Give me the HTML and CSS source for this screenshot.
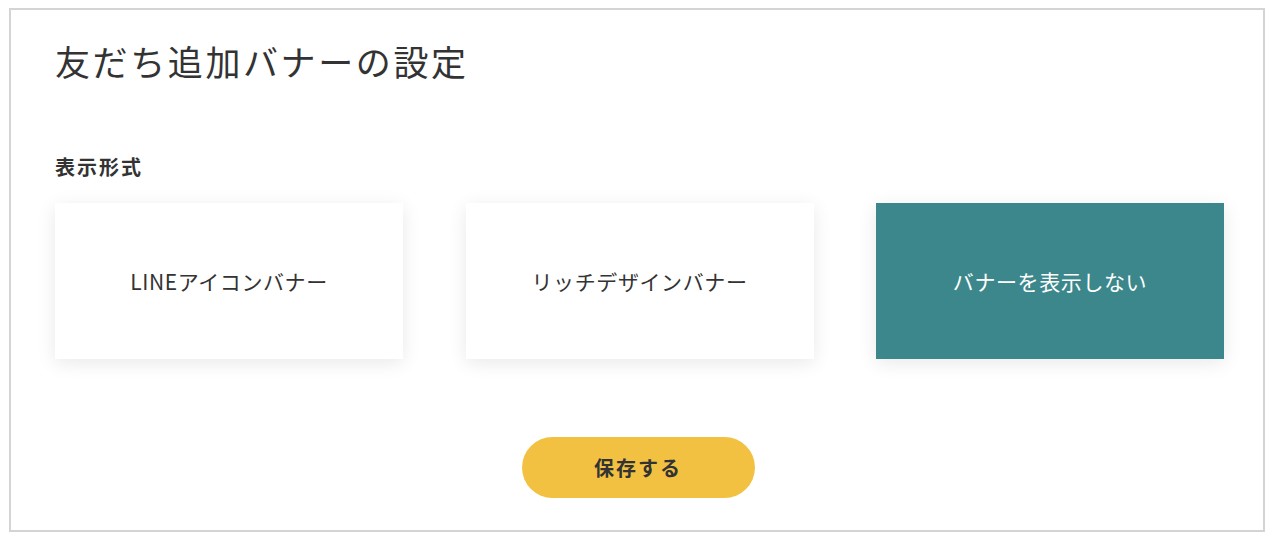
FILE: index.html
```html
<!DOCTYPE html>
<html lang="ja">
<head>
<meta charset="utf-8">
<link rel="stylesheet" href="styles.css">
</head>
<body>
<div class="panel">
  <h1 class="title">友だち追加バナーの設定</h1>
  <h2 class="label">表示形式</h2>
  <div class="options">
    <div class="option">LINEアイコンバナー</div>
    <div class="option">リッチデザインバナー</div>
    <div class="option selected">バナーを表示しない</div>
  </div>
  <div class="actions">
    <button class="save">保存する</button>
  </div>
</div>
</body>
</html>
```
FILE: styles.css
```css
html, body {
  margin: 0;
  padding: 0;
  background: #fff;
}
body {
  font-family: "Noto Sans CJK JP", "Noto Sans", sans-serif;
  color: #333;
}
.panel {
  box-sizing: border-box;
  margin: 8px 0 0 9px;
  width: 1256px;
  height: 524px;
  border: 2px solid #d4d4d4;
  padding: 22px 40px 0 44px;
}
.title {
  margin: 0;
  font-size: 35px;
  font-weight: 400;
  letter-spacing: 2.6px;
  line-height: 58px;
}
.label {
  margin: 63px 0 0;
  font-size: 20px;
  font-weight: 700;
  letter-spacing: 2px;
  line-height: 28px;
}
.options {
  margin-top: 22px;
  display: grid;
  grid-template-columns: repeat(3, 348px);
  column-gap: 62.5px;
}
.option {
  height: 156px;
  background: #fff;
  box-shadow: 0 4px 18px rgba(0, 0, 0, 0.09);
  display: flex;
  align-items: center;
  justify-content: center;
  font-size: 21px;
  letter-spacing: 0.6px;
  color: #333;
}
.option.selected {
  background: #3c878b;
  color: #fff;
}
.actions {
  margin-top: 78px;
  display: flex;
  justify-content: center;
  padding-right: 2px;
}
.save {
  width: 233px;
  height: 61px;
  border: none;
  border-radius: 31px;
  background: #f2c141;
  font-family: "Noto Sans CJK JP", "Noto Sans", sans-serif;
  font-size: 20px;
  font-weight: 700;
  letter-spacing: 2px;
  color: #333;
}
```
